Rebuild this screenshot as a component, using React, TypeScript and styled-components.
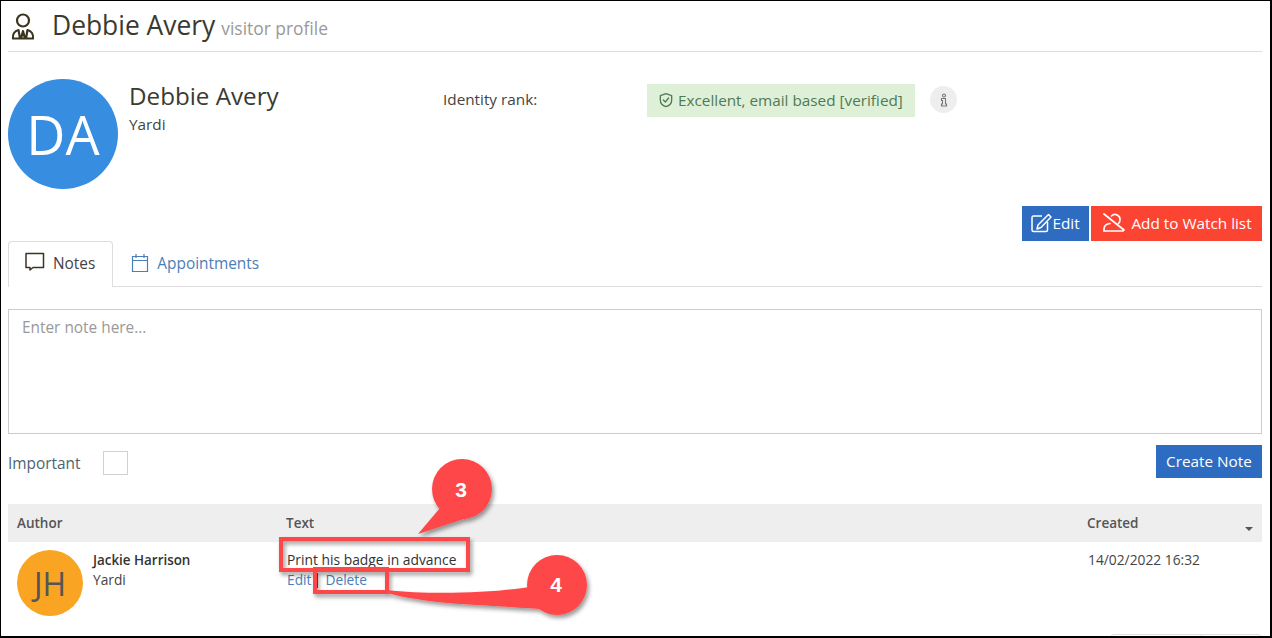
import React from "react";
import styled, { createGlobalStyle } from "styled-components";

const Global = createGlobalStyle`
  html, body { margin: 0; padding: 0; background: #fff; }
  body { font-family: "Open Sans", "Liberation Sans", sans-serif; color: #3a3a3a; }
`;

const Frame = styled.div`
  position: relative;
  box-sizing: border-box;
  width: 1272px;
  height: 638px;
  overflow: hidden;
  background: #fff;
  border-style: solid;
  border-color: #000;
  border-width: 1px 2px 2px 1px;
  padding: 0 8px 0 7px;
`;

const Header = styled.header`
  display: flex;
  align-items: center;
  height: 50px;
  border-bottom: 1px solid #ddd;
`;
const HeaderIcon = styled.svg`
  width: 24px;
  height: 27px;
  margin: 1px 17px 0 3px;
  color: #3b3520;
`;
const Title = styled.h1`
  margin: 0;
  font-size: 26.4px;
  font-weight: 400;
  line-height: 48px;
  color: #3b3a30;
`;
const TitleSub = styled.small`
  font-size: 17.4px;
  color: #999;
  margin-left: 6px;
`;

const Profile = styled.section`
  display: flex;
  margin-top: 27px;
  height: 127px;
`;
const Avatar = styled.div<{ $size: number; $bg: string; $fg: string; $font: number }>`
  flex: none;
  display: flex;
  align-items: center;
  justify-content: center;
  width: ${(p) => p.$size}px;
  height: ${(p) => p.$size}px;
  border-radius: 50%;
  background: ${(p) => p.$bg};
  color: ${(p) => p.$fg};
  font-size: ${(p) => p.$font}px;
`;
const ProfileName = styled.div`
  width: 314px;
  margin-left: 11px;
`;
const Name = styled.div`
  font-size: 24.2px;
  line-height: 33px;
  color: #3b3a30;
`;
const Org = styled.div`
  font-size: 15.3px;
  line-height: 20px;
  margin-top: 2px;
  color: #444;
`;
const RankLabel = styled.div`
  width: 204px;
  font-size: 15.3px;
  line-height: 20px;
  margin-top: 10px;
  color: #444;
`;
const RankBadge = styled.div`
  display: flex;
  align-items: center;
  gap: 4px;
  box-sizing: border-box;
  width: 268px;
  height: 33px;
  margin-top: 5px;
  padding: 0 0 2px 11px;
  background: #dff0d8;
  color: #4f7a55;
  font-size: 15.3px;
`;
const InfoDot = styled.div`
  display: flex;
  align-items: center;
  justify-content: center;
  width: 27px;
  height: 27px;
  margin: 7px 0 0 15px;
  border-radius: 50%;
  background: #eee;
  color: #777;
`;

const Actions = styled.div`
  display: flex;
  justify-content: flex-end;
  gap: 2px;
  height: 35px;
`;
const Button = styled.button<{ $bg: string }>`
  display: inline-flex;
  align-items: center;
  justify-content: center;
  box-sizing: border-box;
  border: 0;
  padding: 0 0 2px;
  background: ${(p) => p.$bg};
  color: #fff;
  font-family: inherit;
  font-size: 15.3px;
`;
const EditButton = styled(Button)`
  width: 67px;
  height: 35px;
`;
const WatchButton = styled(Button)`
  width: 171px;
  height: 35px;
  gap: 6px;
`;

const Tabs = styled.nav`
  display: flex;
  height: 46px;
  border-bottom: 1px solid #ddd;
  box-sizing: border-box;
`;
const Tab = styled.div<{ $active?: boolean }>`
  display: flex;
  align-items: center;
  gap: 8px;
  box-sizing: border-box;
  height: ${(p) => (p.$active ? 46 : 45)}px;
  padding: 0 17px 2px ${(p) => (p.$active ? 16 : 17)}px;
  font-size: 15.4px;
  color: ${(p) => (p.$active ? "#444" : "#4a7eb8")};
  background: ${(p) => (p.$active ? "#fff" : "transparent")};
  border: 1px solid ${(p) => (p.$active ? "#ddd" : "transparent")};
  border-bottom: 0;
  border-radius: 4px 4px 0 0;
`;
const NotesGlyph = styled.svg`
  margin-top: -4px;
`;

const NoteBox = styled.div`
  box-sizing: border-box;
  height: 125px;
  margin-top: 22px;
  padding: 8px 13px;
  border: 1px solid #ccc;
  font-size: 15.4px;
  line-height: 20px;
  color: #999;
`;
const NoteFooter = styled.div`
  display: flex;
  align-items: flex-start;
  margin-top: 11px;
  height: 59px;
`;
const ImportantLabel = styled.div`
  font-size: 15.4px;
  line-height: 20px;
  margin-top: 9px;
  color: #4d6470;
`;
const CheckBox = styled.div`
  box-sizing: border-box;
  width: 25px;
  height: 24px;
  margin: 6px 0 0 23px;
  border: 1px solid #d5d0cc;
`;
const CreateButton = styled(Button)`
  width: 106px;
  height: 33px;
  margin-left: auto;
`;

const Row = styled.div`
  display: grid;
  grid-template-columns: 269px 801px 1fr;
`;
const HeadRow = styled(Row)`
  position: relative;
  height: 38px;
  align-items: center;
  background: #eee;
  font-size: 13.5px;
  font-weight: 600;
  color: #555;
`;
const HeadCell = styled.div`
  padding: 0 0 1px 9px;
`;
const SortCaret = styled.span`
  position: absolute;
  right: 9px;
  top: 23px;
  width: 0;
  height: 0;
  border-left: 4px solid transparent;
  border-right: 4px solid transparent;
  border-top: 4px solid #555;
`;
const AuthorCell = styled.div`
  display: flex;
  padding: 8px 0 0 9px;
`;
const AuthorText = styled.div`
  margin-left: 10px;
`;
const AuthorName = styled.div`
  font-size: 13.4px;
  line-height: 20px;
  font-weight: 600;
  color: #333;
`;
const AuthorOrg = styled.div`
  font-size: 13.75px;
  line-height: 19px;
  color: #444;
`;
const TextCell = styled.div`
  padding: 8px 0 0 10px;
  font-size: 13.85px;
  line-height: 20px;
  color: #333;
`;
const NoteLinks = styled.div`
  display: flex;
  color: #4a7eb8;
  font-size: 13.75px;
`;
const LinkSep = styled.span`
  margin: 0 7px 0 6px;
  border-left: 1px solid #2e5f96;
  height: 15px;
  align-self: center;
`;
const DateCell = styled.div`
  padding: 8px 0 0 10px;
  font-size: 13.8px;
  line-height: 20px;
  color: #444;
`;
const Pager = styled.div`
  position: absolute;
  right: 8px;
  top: 633px;
  display: flex;
  width: 152px;
  height: 20px;
  box-sizing: border-box;
  border: 1px solid #ddd;
  border-radius: 4px;
`;
const PagerCell = styled.div`
  width: 90px;
  border-right: 1px solid #ddd;
`;
const Overlay = styled.svg`
  position: absolute;
  left: -1px;
  top: -1px;
  width: 1272px;
  height: 638px;
  pointer-events: none;
`;
const CalloutNumber = styled.text`
  font-family: "Liberation Sans", Arial, sans-serif;
  font-size: 21px;
  font-weight: 700;
  fill: #fff;
  text-anchor: middle;
`;

const PersonIcon = () => (
  <HeaderIcon viewBox="0 0 24 27" fill="none" stroke="currentColor" strokeWidth="2.2" strokeLinejoin="round">
    <circle cx="12" cy="7.500" r="6" />
    <path d="M2 25.500c-.500-4 1.500-7.500 5.500-8.500l1.500 8.500zM22 25.500c.500-4-1.500-7.500-5.500-8.500l-1.500 8.500zM2 25.500h20M12 18l-2 7.500h4z" />
  </HeaderIcon>
);

export default function App() {
  return (
    <>
      <Global />
      <Frame>
        <Header>
          <PersonIcon />
          <Title>
            Debbie Avery<TitleSub>visitor profile</TitleSub>
          </Title>
        </Header>
        <Profile>
          <Avatar $size={110} $bg="#378de0" $fg="#fff" $font={54}>DA</Avatar>
          <ProfileName>
            <Name>Debbie Avery</Name>
            <Org>Yardi</Org>
          </ProfileName>
          <RankLabel>Identity rank:</RankLabel>
          <RankBadge>
            <svg width="16" height="16" viewBox="0 0 24 24" fill="none" stroke="currentColor" strokeWidth="2" strokeLinecap="round" strokeLinejoin="round">
              <path d="M12 2.500l8.500 3v6.500c0 5-3.500 8.500-8.500 10-5-1.500-8.500-5-8.500-10V5.500z" />
              <path d="M8 12l3 3 5-6" />
            </svg>
            Excellent, email based [verified]
          </RankBadge>
          <InfoDot>
            <svg width="8" height="14" viewBox="0 0 8 14" fill="none" stroke="currentColor" strokeWidth="1.100">
              <circle cx="4" cy="2.500" r="1.500" />
              <path d="M2.500 5.500h3v5.500h1v2h-5v-2h1v-3.500h-1v-2z" />
            </svg>
          </InfoDot>
        </Profile>
        <Actions>
          <EditButton $bg="#2d6cc0">
            <svg width="21" height="20" viewBox="0 0 21 20" fill="none" stroke="currentColor" strokeWidth="1.500" strokeLinejoin="round">
              <path d="M11 3H2.500A1.500 1.500 0 0 0 1 4.500v12.500a1.500 1.500 0 0 0 1.500 1.500H15a1.500 1.500 0 0 0 1.500-1.500V9" />
              <path d="M17.500 1.500l2.500 2.500L10 14.500l-4 1.500 1-4z" />
            </svg>
            Edit
          </EditButton>
          <WatchButton $bg="#fc4433">
            <svg width="24" height="20" viewBox="0 0 24 20" fill="none" stroke="currentColor" strokeWidth="1.700" strokeLinecap="round">
              <path d="M10.500 3a5 5 0 0 1 8.500 4c0 1.500-.500 2.500-1.500 3.500" />
              <path d="M9 10.500c-3.500.500-6 2.500-6 5.500v2h19M3 1l20 16" />
            </svg>
            Add to Watch list
          </WatchButton>
        </Actions>
        <Tabs>
          <Tab $active>
            <NotesGlyph width="20" height="20" viewBox="0 0 20 20" fill="none" stroke="#3b3520" strokeWidth="1.500" strokeLinejoin="round">
              <path d="M1 1.500h17.500v14H8l-3 2.500v-2.500H1z" />
            </NotesGlyph>
            Notes
          </Tab>
          <Tab>
            <svg width="18" height="20" viewBox="0 0 18 20" fill="none" stroke="currentColor" strokeWidth="1.200">
              <path d="M1.500 3.500h15v15h-15zM1.500 7.500h15M5 1v4M13 1v4" />
            </svg>
            Appointments
          </Tab>
        </Tabs>
        <NoteBox>Enter note here...</NoteBox>
        <NoteFooter>
          <ImportantLabel>Important</ImportantLabel>
          <CheckBox />
          <CreateButton $bg="#2d6cc0">Create Note</CreateButton>
        </NoteFooter>
        <HeadRow>
          <HeadCell>Author</HeadCell>
          <HeadCell>Text</HeadCell>
          <HeadCell>Created</HeadCell>
          <SortCaret />
        </HeadRow>
        <Row>
          <AuthorCell>
            <Avatar $size={66} $bg="#faa423" $fg="#555" $font={32}>JH</Avatar>
            <AuthorText>
              <AuthorName>Jackie Harrison</AuthorName>
              <AuthorOrg>Yardi</AuthorOrg>
            </AuthorText>
          </AuthorCell>
          <TextCell>
            Print his badge in advance
            <NoteLinks>
              Edit<LinkSep />Delete
            </NoteLinks>
          </TextCell>
          <DateCell>14/02/2022 16:32</DateCell>
        </Row>
        <Pager>
          <PagerCell />
        </Pager>
        <Overlay viewBox="0 0 1272 638">
          <defs>
            <filter id="drop" x="-20%" y="-20%" width="150%" height="150%">
              <feDropShadow dx="2" dy="3" stdDeviation="2" floodColor="#000" floodOpacity="0.4" />
            </filter>
          </defs>
          <g filter="url(#drop)">
            <circle cx="462" cy="489" r="30" fill="#fd4749" />
            <path d="M418 534L440 508L470 517z" fill="#fd4749" />
            <rect x="281" y="539" width="187" height="31" fill="none" stroke="#fd4749" strokeWidth="4" />
            <rect x="315" y="569" width="72" height="23" fill="none" stroke="#fd4749" strokeWidth="4" />
            <path d="M387 590C430 595 490 593 530 587L540 609C490 605 430 605 387 593z" fill="#fd4749" />
            <circle cx="557" cy="585" r="30" fill="#fd4749" />
          </g>
          <CalloutNumber x="461" y="497">3</CalloutNumber>
          <CalloutNumber x="556" y="592">4</CalloutNumber>
        </Overlay>
      </Frame>
    </>
  );
}
